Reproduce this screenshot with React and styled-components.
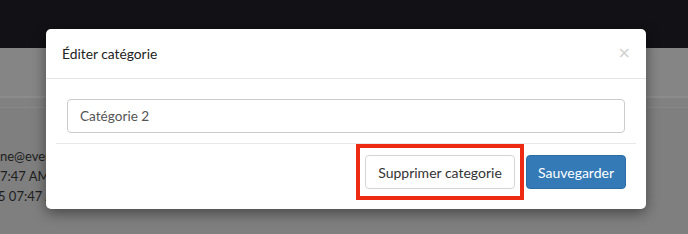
import React from "react";
import styled, { createGlobalStyle } from "styled-components";

const Global = createGlobalStyle`
  html, body { margin: 0; padding: 0; background: #7f7f7f; }
  body { font-family: Lato, "Open Sans", "Liberation Sans", sans-serif; }
  * { box-sizing: border-box; }
`;

const Page = styled.div`
  position: relative;
  width: 688px;
  height: 234px;
  overflow: hidden;
  background: #7f7f7f;
  display: flex;
  flex-direction: column;
`;

const Navbar = styled.div`
  height: 48px;
  background: #111116;
  flex: none;
`;

const Toolbar = styled.div`
  height: 50px;
  background: #858585;
  border-bottom: 2px solid #8c8c8c;
  flex: none;
`;

const SubBar = styled.div`
  height: 10px;
  background: #818181;
  border-bottom: 1px solid #888;
  flex: none;
`;

const Table = styled.div`
  display: flex;
  flex-direction: column;
  padding-top: 38px;
  font-size: 13px;
  color: #1e1e1e;
  line-height: 20px;
`;

const Cell = styled.div`
  white-space: nowrap;
  margin-left: ${(p) => p.$shift || 0}px;
`;

const Modal = styled.div`
  position: absolute;
  left: 46px;
  top: 29px;
  width: 600px;
  height: 180px;
  background: #fff;
  border-radius: 5px;
  box-shadow: 0 4px 14px rgba(0, 0, 0, 0.45);
  display: flex;
  flex-direction: column;
`;

const Header = styled.div`
  height: 50px;
  border-bottom: 1px solid #e5e5e5;
  display: flex;
  align-items: center;
  justify-content: space-between;
  padding: 0 15px 1px 16px;
`;

const Title = styled.div`
  font-size: 13.8px;
  color: #222;
`;

const Close = styled.div`
  font-size: 16px;
  line-height: 1;
  color: #cfcfcf;
  font-family: "DejaVu Sans", sans-serif;
`;

const Body = styled.div`
  padding: 20px 21px 0 21px;
`;

const Input = styled.div`
  height: 34px;
  border: 1px solid #cccccc;
  border-radius: 4px;
  padding: 0 12px;
  display: flex;
  align-items: center;
  font-size: 13.6px;
  color: #555;
`;

const Divider = styled.div`
  height: 1px;
  background: #e8e8e8;
  margin: 10px -11px 0 -11px;
`;

const Footer = styled.div`
  display: flex;
  justify-content: flex-end;
  align-items: center;
  gap: 2px;
  padding: 0 20px 0 0;
`;

const Highlight = styled.div`
  border: 4px solid #ee2a12;
  padding: 7px 5px;
  display: flex;
`;

const Button = styled.div`
  flex: none;
  height: 34px;
  padding: 0;
  border-radius: 4px;
  display: flex;
  align-items: center;
  justify-content: center;
  white-space: nowrap;
  font-size: 14px;
  border: 1px solid ${(p) => (p.$primary ? "#2e6da4" : "#d4d4d4")};
  background: ${(p) => (p.$primary ? "#337ab7" : "#fff")};
  color: ${(p) => (p.$primary ? "#fff" : "#333")};
  width: ${(p) => p.$w}px;
`;

export default function App() {
  return (
    <>
      <Global />
      <Page>
        <Navbar />
        <Toolbar />
        <SubBar />
        <Table>
          <Cell>ne@eventbrite.com</Cell>
          <Cell>7:47 AM</Cell>
          <Cell $shift={-2}>5 07:47 AM</Cell>
        </Table>
        <Modal>
          <Header>
            <Title>Éditer catégorie</Title>
            <Close>×</Close>
          </Header>
          <Body>
            <Input>Catégorie 2</Input>
            <Divider />
          </Body>
          <Footer>
            <Highlight>
              <Button $w={150}>Supprimer categorie</Button>
            </Highlight>
            <Button $primary $w={100}>Sauvegarder</Button>
          </Footer>
        </Modal>
      </Page>
    </>
  );
}
